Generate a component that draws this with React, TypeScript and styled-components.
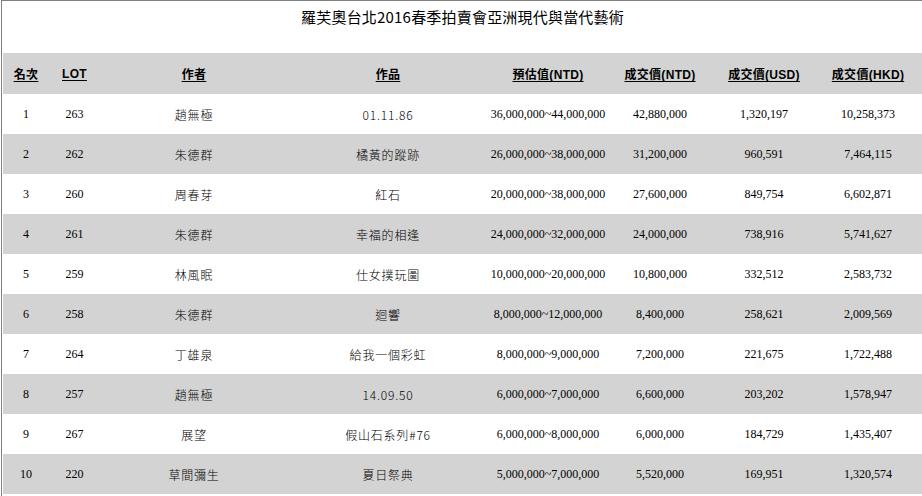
import React from 'react'
import styled, {createGlobalStyle} from 'styled-components'

const GlobalStyle = createGlobalStyle`
    html, body {
      margin: 0;
      padding: 0;
      background: #fff;
    }
    body {
      font-family: "Liberation Serif", "Noto Sans CJK TC", serif;
      color: #000;
    }
`

const Frame = styled.div`
    width: 921px;
    height: 495px;
    margin-left: 1px;
    border-top: 1px solid #808080;
    border-left: 1px solid #808080;
    overflow: hidden;
`

const Title = styled.div`
    height: 52px;
    padding-top: 6px;
    box-sizing: border-box;
    text-align: center;
    font-family: "Noto Sans CJK TC", serif;
    font-weight: 400;
    font-size: 15px;
    line-height: 20px;
    letter-spacing: 0.2px;
    color: #000;
`

const cols = '46px 51px 188px 200px 120px 104px 104px 104px'

const Row = styled.div<{$shaded?: boolean; $height?: number}>`
    display: grid;
    grid-template-columns: ${cols};
    height: ${p => p.$height ?? 40}px;
    align-items: center;
    background: ${p => (p.$shaded ? '#d3d3d3' : '#fff')};
    margin-left: 1px;
`

const HeadCell = styled.div`
    text-align: center;
    font-family: "Liberation Sans", "Noto Sans CJK TC", sans-serif;
    font-weight: bold;
    font-size: 12px;
    letter-spacing: 0.3px;
    text-decoration: underline;
    text-underline-offset: 2px;
    color: #000;
`

const Cell = styled.div<{$cjk?: boolean}>`
    text-align: center;
    font-family: ${p => (p.$cjk ? '"Noto Sans CJK TC", serif' : '"Liberation Serif", "Noto Sans CJK TC", serif')};
    font-weight: ${p => (p.$cjk ? 300 : 400)};
    font-size: 12px;
    letter-spacing: ${p => (p.$cjk ? '0.8px' : '0')};
    color: #000;
`

const headers = ['名次', 'LOT', '作者', '作品', '預估值(NTD)', '成交價(NTD)', '成交價(USD)', '成交價(HKD)']

const rows = [
    ['1', '263', '趙無極', '01.11.86', '36,000,000~44,000,000', '42,880,000', '1,320,197', '10,258,373'],
    ['2', '262', '朱德群', '橘黃的蹤跡', '26,000,000~38,000,000', '31,200,000', '960,591', '7,464,115'],
    ['3', '260', '周春芽', '紅石', '20,000,000~38,000,000', '27,600,000', '849,754', '6,602,871'],
    ['4', '261', '朱德群', '幸福的相逢', '24,000,000~32,000,000', '24,000,000', '738,916', '5,741,627'],
    ['5', '259', '林風眠', '仕女撲玩圖', '10,000,000~20,000,000', '10,800,000', '332,512', '2,583,732'],
    ['6', '258', '朱德群', '迴響', '8,000,000~12,000,000', '8,400,000', '258,621', '2,009,569'],
    ['7', '264', '丁雄泉', '給我一個彩虹', '8,000,000~9,000,000', '7,200,000', '221,675', '1,722,488'],
    ['8', '257', '趙無極', '14.09.50', '6,000,000~7,000,000', '6,600,000', '203,202', '1,578,947'],
    ['9', '267', '展望', '假山石系列#76', '6,000,000~8,000,000', '6,000,000', '184,729', '1,435,407'],
    ['10', '220', '草間彌生', '夏日祭典', '5,000,000~7,000,000', '5,520,000', '169,951', '1,320,574'],
]

const App: React.FC = () => {
    return (
        <>
            <GlobalStyle/>
            <Frame>
                <Title>羅芙奧台北2016春季拍賣會亞洲現代與當代藝術</Title>
                <Row $shaded $height={41}>
                    {headers.map(h => <HeadCell key={h}>{h}</HeadCell>)}
                </Row>
                {rows.map((r, i) => (
                    <Row key={r[0]} $shaded={i % 2 === 1}>
                        {r.map((v, j) => (
                            <Cell key={j} $cjk={j === 2 || j === 3}>{v}</Cell>
                        ))}
                    </Row>
                ))}
            </Frame>
        </>
    )
}

export default App
